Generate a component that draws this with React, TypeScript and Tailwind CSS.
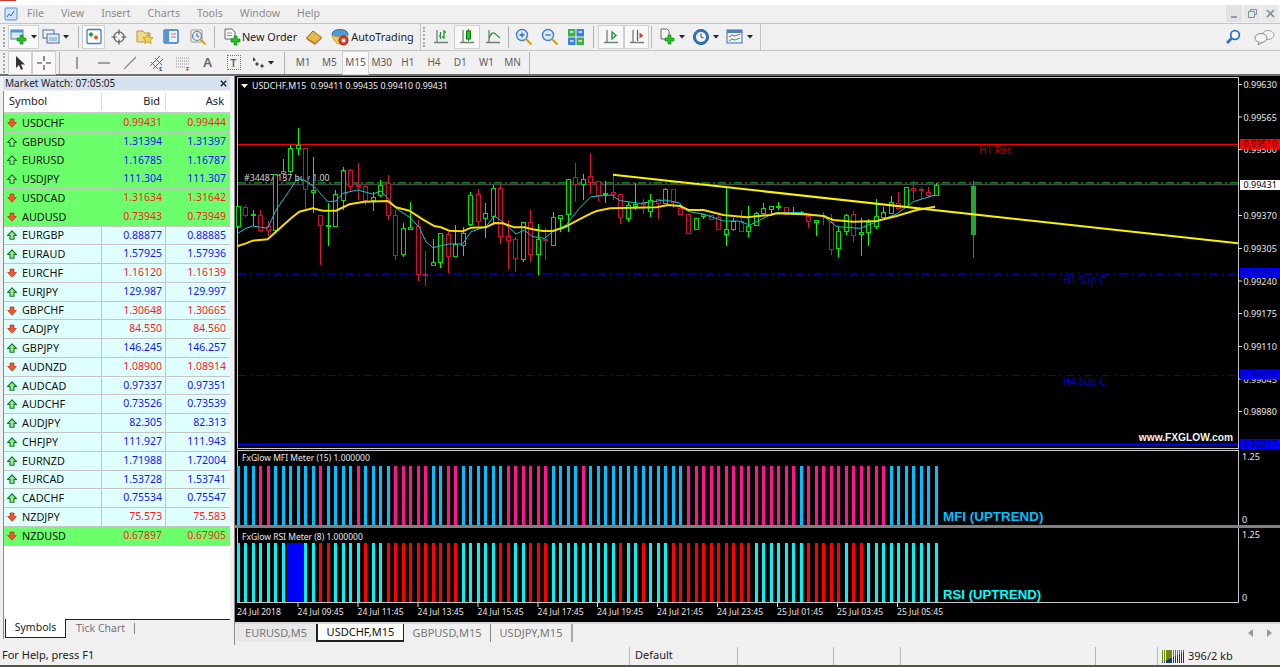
import type { ReactNode } from 'react'

const menus = ['File', 'View', 'Insert', 'Charts', 'Tools', 'Window', 'Help']
const periods = ['M1', 'M5', 'M15', 'M30', 'H1', 'H4', 'D1', 'W1', 'MN']

// symbol, bid, ask, falling, highlighted
const quotes: [string, string, string, boolean, boolean][] = [
  ['USDCHF', '0.99431', '0.99444', true, true],
  ['GBPUSD', '1.31394', '1.31397', false, true],
  ['EURUSD', '1.16785', '1.16787', false, true],
  ['USDJPY', '111.304', '111.307', false, true],
  ['USDCAD', '1.31634', '1.31642', true, true],
  ['AUDUSD', '0.73943', '0.73949', true, true],
  ['EURGBP', '0.88877', '0.88885', false, false],
  ['EURAUD', '1.57925', '1.57936', false, false],
  ['EURCHF', '1.16120', '1.16139', true, false],
  ['EURJPY', '129.987', '129.997', false, false],
  ['GBPCHF', '1.30648', '1.30665', true, false],
  ['CADJPY', '84.550', '84.560', true, false],
  ['GBPJPY', '146.245', '146.257', false, false],
  ['AUDNZD', '1.08900', '1.08914', true, false],
  ['AUDCAD', '0.97337', '0.97351', false, false],
  ['AUDCHF', '0.73526', '0.73539', false, false],
  ['AUDJPY', '82.305', '82.313', false, false],
  ['CHFJPY', '111.927', '111.943', false, false],
  ['EURNZD', '1.71988', '1.72004', false, false],
  ['EURCAD', '1.53728', '1.53741', false, false],
  ['CADCHF', '0.75534', '0.75547', false, false],
  ['NZDJPY', '75.573', '75.583', true, false],
  ['NZDUSD', '0.67897', '0.67905', true, true],
]

// [green?, wick top, body top, body bottom, wick bottom], read from the chart at 3x
type C = [number, number, number, number, number]
const candlesA: C[] = [
  [1, 258, 258, 320, 325], [0, 255, 262, 285, 290], [1, 270, 284, 287, 318], [0, 270, 287, 330, 335],
  [0, 303, 318, 330, 348], [1, 162, 162, 330, 335], [1, 118, 153, 160, 178], [1, 75, 85, 153, 160],
  [1, 25, 75, 85, 105], [0, 85, 85, 208, 270], [1, 112, 211, 217, 280], [0, 287, 287, 316, 435],
  [1, 250, 315, 317, 378], [1, 210, 222, 318, 320], [1, 140, 152, 240, 270], [0, 148, 152, 200, 215],
  [0, 130, 197, 200, 240], [0, 195, 200, 240, 255], [1, 215, 232, 240, 272], [1, 180, 195, 225, 232],
  [0, 165, 190, 285, 300], [0, 270, 287, 405, 420], [1, 308, 324, 403, 412], [1, 245, 322, 327, 330],
  [0, 300, 320, 462, 482], [0, 393, 464, 466, 497], [1, 358, 427, 436, 436], [1, 338, 340, 428, 445],
  [0, 335, 343, 410, 458], [1, 315, 373, 410, 410], [1, 320, 340, 375, 407], [1, 215, 225, 313, 318],
  [0, 207, 223, 303, 318], [1, 250, 280, 296, 355], [1, 195, 205, 290, 315], [0, 195, 205, 348, 372],
  [0, 300, 350, 360, 450], [0, 350, 357, 415, 455], [1, 307, 307, 418, 425], [0, 270, 307, 402, 425],
  [1, 312, 358, 402, 465], [0, 325, 358, 360, 420], [1, 275, 292, 375, 377], [1, 287, 287, 295, 335],
  [1, 178, 178, 282, 335], [0, 130, 172, 193, 245], [1, 163, 178, 192, 240], [0, 98, 170, 188, 222],
]
const candlesB: C[] = [
  [0, 124, 124, 165, 182], [1, 122, 160, 163, 190], [0, 105, 157, 163, 180], [0, 163, 163, 233, 252],
  [1, 185, 197, 235, 245], [1, 128, 193, 200, 210], [0, 178, 190, 193, 222], [1, 162, 182, 215, 232],
  [0, 177, 177, 190, 237], [1, 145, 147, 190, 192], [0, 148, 148, 188, 205], [0, 190, 205, 222, 225],
  [0, 222, 224, 281, 282], [1, 235, 235, 268, 270], [1, 222, 224, 228, 237], [0, 225, 225, 237, 240],
  [0, 225, 232, 268, 270], [1, 140, 267, 284, 318], [1, 235, 245, 268, 272], [0, 210, 245, 274, 275],
  [1, 198, 259, 273, 290], [1, 215, 220, 256, 258], [1, 190, 205, 220, 225], [1, 197, 199, 207, 228],
  [1, 187, 199, 201, 210], [0, 203, 203, 222, 225], [1, 200, 218, 221, 222], [1, 212, 217, 220, 225],
  [0, 225, 230, 245, 265], [1, 240, 242, 247, 287], [0, 215, 225, 228, 255], [0, 222, 248, 329, 345],
  [1, 262, 273, 326, 352], [1, 222, 227, 275, 285], [0, 213, 224, 285, 305], [1, 235, 277, 283, 347],
  [1, 238, 248, 278, 318], [1, 177, 230, 258, 268], [1, 200, 217, 232, 240], [1, 168, 188, 220, 222],
  [0, 155, 190, 205, 205], [1, 143, 143, 198, 205], [0, 123, 145, 151, 180], [0, 140, 149, 151, 178],
  [0, 142, 157, 166, 175], [1, 128, 135, 165, 168],
]
const candles = [
  ...candlesA.map((c) => [c[0], ...c.slice(1).map((v) => 120 + v / 3)]),
  ...candlesB.map((c) => [c[0], ...c.slice(1).map((v) => 140 + v / 3)]),
]

const barX = (i: number) => 237.7 + 7.505 * i

const pts = (list: number[][], ox: number, oy: number) => list.map(([x, y]) => `${ox + x / 3},${oy + y / 3}`).join(' ')
const yellowLine =
  pts([[5, 378], [30, 370], [50, 362], [95, 358], [120, 335], [165, 295], [190, 275], [230, 265], [260, 272], [300, 272], [340, 253], [385, 245], [455, 243], [480, 262], [520, 272], [560, 298], [595, 318], [615, 322], [640, 332], [680, 334], [705, 323], [750, 322], [775, 309], [800, 310], [835, 322], [865, 322], [890, 328], [920, 333], [950, 333], [985, 322], [1030, 298], [1065, 280]], 236, 120) +
  ' ' +
  pts([[20, 213], [60, 205], [200, 202], [235, 195], [270, 198], [295, 210], [340, 210], [400, 225], [470, 232], [540, 225], [560, 220], [640, 223], [700, 228], [730, 240], [790, 245], [860, 243], [920, 228], [980, 210], [1035, 200]], 590, 140)
const cyanLine =
  pts([[5, 340], [30, 325], [50, 318], [95, 325], [120, 270], [165, 205], [185, 175], [210, 183], [240, 205], [275, 245], [300, 243], [320, 220], [365, 210], [410, 222], [435, 213], [460, 240], [480, 265], [525, 295], [550, 323], [570, 365], [590, 383], [640, 372], [680, 372], [705, 335], [750, 320], [775, 287], [800, 305], [840, 342], [865, 330], [890, 350], [925, 355], [950, 335], [990, 315], [1030, 265], [1065, 230]], 236, 120) +
  ' ' +
  pts([[65, 165], [90, 182], [150, 190], [225, 180], [265, 188], [295, 215], [340, 222], [400, 243], [445, 243], [480, 255], [540, 225], [560, 218], [630, 218], [700, 228], [740, 260], [810, 265], [860, 245], [920, 222], [970, 185], [1035, 165]], 590, 140)

const priceScale: [string, number][] = [
  ['0.99630', 85], ['0.99565', 117.5], ['0.99500', 150], ['0.99370', 216], ['0.99305', 249],
  ['0.99240', 281.5], ['0.99175', 314], ['0.99110', 347], ['0.99045', 379.5], ['0.98980', 412],
]
const priceTags: [string, number, string, string][] = [
  ['0.99510', 139, '#ff0000', '#400000'],
  ['0.99431', 180, '#ffffff', '#000000'],
  ['0.99255', 268, '#0000ff', '#000060'],
  ['0.99054', 369.5, '#0000ff', '#000060'],
  ['0.98917', 439, '#0000ff', '#000060'],
]

const isIn = (i: number, ranges: number[][]) => ranges.some(([a, b]) => i >= a && i <= b)
const mfiPink = [[3, 4], [11, 11], [16, 16], [21, 25], [28, 29], [36, 41], [46, 46], [60, 74], [76, 86]]
const rsiRed = [[11, 12], [17, 17], [20, 29], [35, 36], [39, 41], [51, 51], [54, 54], [58, 68], [76, 80], [82, 83]]
const bars = Array.from({ length: 94 }, (_, i) => i)

const timeLabels: [string, number][] = [
  ['24 Jul 2018', 237], ['24 Jul 09:45', 297.5], ['24 Jul 11:45', 357.5], ['24 Jul 13:45', 417.5],
  ['24 Jul 15:45', 477.5], ['24 Jul 17:45', 537.5], ['24 Jul 19:45', 597], ['24 Jul 21:45', 657],
  ['24 Jul 23:45', 717], ['25 Jul 01:45', 777], ['25 Jul 03:45', 837], ['25 Jul 05:45', 897],
]

function Icon({ children, w = 18 }: { children: ReactNode; w?: number }) {
  return (
    <svg width={w} height="18" viewBox={`0 0 ${w} 18`} className="shrink-0">
      {children}
    </svg>
  )
}

const Plus = ({ x, y }: { x: number; y: number }) => (
  <path d={`M${x + 3} ${y}h3v3h3v3h-3v3h-3v-3h-3v-3h3z`} fill="#22c322" stroke="#0a7a0a" strokeWidth="0.6" />
)

const Caret = () => (
  <svg width="6" height="4" viewBox="0 0 6 4" className="ml-[3px] shrink-0">
    <path d="M0 0h6L3 3.5z" fill="#222" />
  </svg>
)

const Axes = () => <path d="M5 2v13M2 14.5h14" stroke="#6f7f7f" strokeWidth="1.3" fill="none" />

function Tool({ width, pressed, children }: { width: string; pressed?: boolean; children: ReactNode }) {
  return (
    <div
      className={`flex h-[24px] shrink-0 items-center justify-center ${width} ${
        pressed ? 'border border-[#d0d0d0] bg-[#f8f8f8]' : ''
      }`}
    >
      {children}
    </div>
  )
}

const Sep = ({ className }: { className: string }) => <div className={`h-[22px] w-[1px] shrink-0 bg-[#b4b4b4] ${className}`} />
const Grip = () => <div className="mr-[2px] h-[20px] w-[3px] shrink-0 border-l-2 border-dotted border-[#a8a8a8]" />

function Arrow({ down }: { down: boolean }) {
  return (
    <svg width="10" height="10" viewBox="0 0 10 10" className="shrink-0">
      {down ? (
        <path d="M3 1h4v3.5h2.4L5 9.3.6 4.5H3z" fill="#f4552a" stroke="#b8321a" strokeWidth="0.7" />
      ) : (
        <path d="M5 .8l4.4 4.7H7v3.7H3V5.5H.6z" fill="#9fe39f" stroke="#0c7c18" strokeWidth="1.1" />
      )}
    </svg>
  )
}

function MainPane() {
  return (
    <svg width="1045" height="374" viewBox="235 76 1045 374" className="block shrink-0 bg-black font-['Noto_Sans',sans-serif]">
      <path d="M237.5 77.5H1238.5V448.5H237.5z" fill="none" stroke="#c8c8c8" strokeWidth="1" shapeRendering="crispEdges" />
      <line x1="238" x2="1238" y1="144.5" y2="144.5" stroke="#f40000" strokeWidth="1.6" />
      <line x1="238" x2="1238" y1="182.8" y2="182.8" stroke="#107a18" strokeWidth="1.8" strokeDasharray="8 3 2 3" />
      <line x1="238" x2="1238" y1="184.6" y2="184.6" stroke="#474747" strokeWidth="1.4" />
      <line x1="238" x2="1238" y1="274" y2="274" stroke="#0000c0" strokeWidth="1.6" strokeDasharray="8 4 2 4" />
      <line x1="238" x2="1238" y1="375.5" y2="375.5" stroke="#0000d8" strokeWidth="1" strokeDasharray="8 4 2 4" />
      <line x1="238" x2="1238" y1="444.5" y2="444.5" stroke="#0000ff" strokeWidth="2" />

      <text x="979" y="154" fontSize="10" fill="#b00000">H1 Res</text>
      <text x="1063" y="284" fontSize="10" fill="#0000c8">H1 Sup C</text>
      <text x="1063" y="384.5" fontSize="10" fill="#0000c8">H4 Sup C</text>
      <text x="244" y="181" fontSize="8.8" fill="#d4d4d4">#34487 137 buy 1.00</text>

      <g shapeRendering="crispEdges">
        {candles.map(([g, wt, bt, bb, wb], i) => {
          const x = Math.round(barX(i))
          const col = g ? '#00e000' : '#c81038'
          return (
            <g key={i}>
              <line x1={x + 0.5} x2={x + 0.5} y1={wt} y2={wb} stroke={g ? '#00ff00' : '#dc143c'} />
              <rect x={x - 1.5} y={bt} width="4" height={Math.max(bb - bt, 1)} fill="#000" stroke={col} />
            </g>
          )
        })}
        <line x1="973" x2="973" y1="181" y2="258" stroke="#1f9c2e" />
        <rect x="970.5" y="186" width="5" height="49" fill="#22a832" />
      </g>

      <polyline points={cyanLine} fill="none" stroke="#12c8d0" strokeWidth="1" />
      <polyline points={yellowLine} fill="none" stroke="#f6dc00" strokeWidth="2" />
      <line x1="613" y1="174.8" x2="1238" y2="243.3" stroke="#f8f400" strokeWidth="2" />

      <path d="M241 84h7l-3.5 4z" fill="#fff" />
      <text x="252" y="89" fontSize="8.8" fill="#f0f0f0" xmlSpace="preserve">USDCHF,M15  0.99411 0.99435 0.99410 0.99431</text>
      <text x="1233" y="440.5" fontSize="10.2" fontWeight="700" textAnchor="end" fill="#f4f4f4" className="font-['Liberation_Sans',sans-serif]">www.FXGLOW.com</text>

      {priceScale.map(([label, y]) => (
        <g key={label}>
          <line x1="1238" x2="1242" y1={y - 0.5} y2={y - 0.5} stroke="#ddd" />
          <text x="1243.5" y={y + 3} fontSize="9" fill="#e8e8e8">{label}</text>
        </g>
      ))}
      {priceTags.map(([label, y, bg, fg]) => (
        <g key={label}>
          <rect x="1240" y={y} width="40" height="10" fill={bg} />
          <text x="1243.5" y={y + 8.2} fontSize="9" fill={fg}>{label}</text>
        </g>
      ))}
    </svg>
  )
}

function MfiPane() {
  return (
    <svg width="1045" height="75" viewBox="235 450 1045 75" className="block shrink-0 bg-black font-['Noto_Sans',sans-serif]">
      <path d="M237.5 525V450.5H1238.5V525" fill="none" stroke="#c8c8c8" shapeRendering="crispEdges" />
      <text x="242" y="461" fontSize="8.5" fill="#e8e8e8">FxGlow MFI Meter (15) 1.000000</text>
      <g shapeRendering="crispEdges">
        {bars.map((i) => (
          <rect key={i} x={Math.round(barX(i)) - 1} y="466" width="3" height="59" fill={isIn(i, mfiPink) ? '#ff1493' : '#00bfff'} />
        ))}
      </g>
      <text x="943" y="520.5" fontSize="13.4" fontWeight="700" fill="#00bfff" className="font-['Liberation_Sans',sans-serif]">MFI (UPTREND)</text>
      <text x="1242" y="459.5" fontSize="9" fill="#e8e8e8">1.25</text>
      <text x="1242" y="523" fontSize="9" fill="#e8e8e8">0</text>
    </svg>
  )
}

function RsiPane() {
  return (
    <svg width="1045" height="94" viewBox="235 528 1045 94" className="block shrink-0 bg-black font-['Noto_Sans',sans-serif]">
      <path d="M237.5 528v74.5H1238.5V528" fill="none" stroke="#c8c8c8" shapeRendering="crispEdges" />
      <text x="242" y="539.5" fontSize="8.5" fill="#e8e8e8">FxGlow RSI Meter (8) 1.000000</text>
      <g shapeRendering="crispEdges">
        {bars.map((i) =>
          i === 7 || i === 8 ? (
            <rect key={i} x={Math.round(barX(i)) - 3} y="543" width="8" height="59" fill="#0000ff" />
          ) : (
            <rect key={i} x={Math.round(barX(i)) - 1} y="543" width="3" height="59" fill={isIn(i, rsiRed) ? '#ff0000' : '#00f4f4'} />
          ),
        )}
      </g>
      <text x="943" y="598.5" fontSize="13.2" fontWeight="700" fill="#00ffff" className="font-['Liberation_Sans',sans-serif]">RSI (UPTREND)</text>
      <text x="1242" y="538" fontSize="9" fill="#e8e8e8">1.25</text>
      <text x="1242" y="600.5" fontSize="9" fill="#e8e8e8">0</text>
      {timeLabels.map(([label, x], i) => (
        <g key={label}>
          {i > 0 && <line x1={x + 0.5} x2={x + 0.5} y1="603" y2="607" stroke="#ddd" />}
          <text x={x} y="615" fontSize="8.6" fill="#e8e8e8">{label}</text>
        </g>
      ))}
    </svg>
  )
}

export default function App() {
  return (
    <div className="flex h-[667px] w-[1280px] flex-col overflow-hidden bg-[#f0f0f0] font-['Noto_Sans',sans-serif] text-[11px] text-black">
      <div className="h-[5px] shrink-0 bg-white">
        <div className="h-[1px] w-[16px] bg-[#d8352a]" />
      </div>

      {/* Menu */}
      <div className="relative flex h-[19px] shrink-0 items-center border-b border-[#c4c4c4] text-[10.6px] text-[#8c8c8c]">
        <svg width="14" height="14" viewBox="0 0 14 14" className="ml-[4px] shrink-0">
          <rect x="1" y="1" width="12" height="12" rx="1" fill="#cfe2f6" stroke="#5b8fc7" />
          <path d="M3 10l2-3 2 2 3-5" stroke="#3b6ea5" fill="none" />
        </svg>
        <div className="ml-[9px] flex gap-[17px]">
          {menus.map((m) => (
            <span key={m}>{m}</span>
          ))}
        </div>
        <div className="ml-auto mr-[2px] flex h-[18px] items-start gap-[2px]">
          <div className="flex h-[17px] w-[16px] items-center justify-center bg-[#e2e2e2]">
            <div className="mt-[6px] h-[2px] w-[6px] bg-[#8a9aa6]" />
          </div>
          <div className="flex h-[17px] w-[16px] items-center justify-center bg-[#e8e8e8]">
            <svg width="9" height="9" viewBox="0 0 9 9">
              <path d="M2.5 2.5V.5h6v5h-2M.5 2.5h6v6h-6z" fill="none" stroke="#7f8f9c" />
            </svg>
          </div>
          <div className="flex h-[17px] w-[16px] items-center justify-center bg-[#e8e8e8]">
            <svg width="9" height="9" viewBox="0 0 9 9">
              <path d="M1 1l7 7M8 1L1 8" stroke="#7f8f9c" strokeWidth="1.6" />
            </svg>
          </div>
        </div>
      </div>

      {/* Main toolbar */}
      <div className="flex h-[27px] shrink-0 items-center">
        <div className="flex h-[27px] w-[421px] shrink-0 items-center border-r border-b border-[#c4c4c4] pl-[3px]">
          <Grip />
          <Tool width="w-[31px]" pressed>
            <Icon>
              <rect x="1" y="2" width="12" height="9" fill="#dcebfa" stroke="#3f80c8" />
              <rect x="1" y="2" width="12" height="2.5" fill="#4f93d8" />
              <Plus x={7} y={7} />
            </Icon>
            <Caret />
          </Tool>
          <Tool width="w-[33px]">
            <Icon>
              <rect x="1" y="2" width="11" height="8" fill="#eef4fb" stroke="#4a6e96" />
              <rect x="5" y="6" width="12" height="9" fill="#dcebfa" stroke="#4a6e96" />
              <path d="M7 10h8M7 12h8" stroke="#7a9ac0" />
            </Icon>
            <Caret />
          </Tool>
          <Sep className="ml-[6px] mr-[3px]" />
          <Tool width="w-[23px]" pressed>
            <Icon w={16}>
              <rect x="1" y="1.5" width="14" height="14" rx="1" fill="#fff" stroke="#3f80c8" strokeWidth="1.3" />
              <path d="M5 4l2.5 2.5L5 9 2.5 6.5z" fill="#1f9c2e" />
              <path d="M10 7l2.5 2.5L10 12 7.5 9.5z" fill="#e25a1c" />
            </Icon>
          </Tool>
          <Tool width="w-[27px]">
            <Icon w={16}>
              <circle cx="8" cy="9" r="5" fill="none" stroke="#7a7a7a" strokeWidth="1.6" />
              <path d="M8 1.5v5M8 11.5v5M.5 9h5M10.5 9h5" stroke="#555" strokeWidth="1.2" />
            </Icon>
          </Tool>
          <Tool width="w-[26px]">
            <Icon>
              <path d="M1 3h6l1.5 2H14v3l-6 6H1z" fill="#f2d98a" stroke="#b89a3c" />
              <path d="M12 6l1.6 3.4 3.4.4-2.5 2.4.7 3.5-3.2-1.8-3.2 1.8.7-3.5L7 9.8l3.4-.4z" fill="#f4d44a" stroke="#a98a20" strokeWidth="0.7" />
            </Icon>
          </Tool>
          <Tool width="w-[26px]">
            <Icon w={16}>
              <rect x="1" y="2" width="14" height="13" rx="1" fill="#eaf3fc" stroke="#2f78c4" strokeWidth="1.4" />
              <rect x="2" y="3" width="4" height="11" fill="#4f93d8" />
              <path d="M8 6h5M8 9h5" stroke="#d05030" strokeWidth="0.8" />
            </Icon>
          </Tool>
          <Tool width="w-[27px]">
            <Icon>
              <rect x="2" y="2" width="11" height="12" rx="1" fill="#f4efe6" stroke="#9a9a9a" />
              <circle cx="8" cy="8" r="4.5" fill="#dce8f4" stroke="#6f7f8f" strokeWidth="1.2" />
              <path d="M8 5.5V8l2 1" stroke="#4a5a6a" fill="none" />
              <path d="M11.5 11.5l5 5" stroke="#d4a020" strokeWidth="2" />
            </Icon>
          </Tool>
          <Sep className="ml-[3px] mr-[4px]" />
          <Tool width="w-[82px]">
            <Icon>
              <path d="M2 1h7l3 3v7H2z" fill="#f4f4f4" stroke="#6b6b6b" />
              <path d="M4 5h5M4 7.5h5" stroke="#999" />
              <Plus x={8} y={8} />
            </Icon>
            <span className="ml-[1px] text-[10.8px] text-[#222]">New Order</span>
          </Tool>
          <Tool width="w-[26px]">
            <Icon>
              <path d="M1.5 10L8 3l8.5 6.5L10 15.5z" fill="#e7b94a" stroke="#8a6418" />
              <path d="M1.5 10v1.5L10 17l6.5-6V9.5L10 15.5z" fill="#b8862c" />
            </Icon>
          </Tool>
          <Tool width="w-[91px]">
            <Icon>
              <ellipse cx="9" cy="6" rx="8" ry="4.5" fill="#4f9ad8" stroke="#2f6ea8" />
              <path d="M1 7c1 5 4 9 8 9s7-3 8-9c-3 2-13 2-16 0z" fill="#f0c85a" stroke="#a98a20" strokeWidth="0.7" />
              <circle cx="12.5" cy="12.5" r="4.5" fill="#e8352a" stroke="#a01c14" />
              <rect x="10.8" y="10.8" width="3.4" height="3.4" fill="#fff" />
            </Icon>
            <span className="ml-[2px] text-[10.8px] text-[#222]">AutoTrading</span>
          </Tool>
        </div>
        <div className="flex h-[27px] w-[340px] shrink-0 items-center border-r border-b border-[#c4c4c4] pl-[2px]">
          <Grip />
          <Tool width="w-[26px]">
            <Icon>
              <Axes />
              <path d="M8.5 4v7M8.5 8H7M12 2v9M12 4h2M12 9h-2" stroke="#1f9c2e" strokeWidth="1.3" fill="none" />
            </Icon>
          </Tool>
          <Tool width="w-[26px]" pressed>
            <Icon>
              <Axes />
              <path d="M10.5 1v12" stroke="#1f7c28" />
              <rect x="8.5" y="3" width="4" height="8" fill="#22c322" stroke="#0a7a0a" />
            </Icon>
          </Tool>
          <Tool width="w-[26px]">
            <Icon>
              <Axes />
              <path d="M5 10c2-4 3-6 5-5s3 3 6 5" stroke="#1f9c2e" strokeWidth="1.2" fill="none" />
            </Icon>
          </Tool>
          <Sep className="mx-[2px]" />
          <Tool width="w-[26px]">
            <Icon>
              <circle cx="7" cy="7" r="5.5" fill="#d8eafc" stroke="#3f80c8" strokeWidth="1.4" />
              <path d="M4.5 7h5M7 4.5v5" stroke="#2f6ea8" strokeWidth="1.3" />
              <path d="M11 11l5.5 5.5" stroke="#d4a020" strokeWidth="2.2" />
            </Icon>
          </Tool>
          <Tool width="w-[26px]">
            <Icon>
              <circle cx="7" cy="7" r="5.5" fill="#d8eafc" stroke="#3f80c8" strokeWidth="1.4" />
              <path d="M4.5 7h5" stroke="#2f6ea8" strokeWidth="1.3" />
              <path d="M11 11l5.5 5.5" stroke="#d4a020" strokeWidth="2.2" />
            </Icon>
          </Tool>
          <Tool width="w-[26px]">
            <Icon>
              <rect x="1" y="1" width="7.5" height="7.5" fill="#3fb04a" />
              <rect x="9.5" y="1" width="7.5" height="7.5" fill="#3f80d8" />
              <rect x="1" y="9.5" width="7.5" height="7.5" fill="#3f80d8" />
              <rect x="9.5" y="9.5" width="7.5" height="7.5" fill="#3fb04a" />
              <path d="M3 4h3.5M11.5 4H15M3 13h3.5M11.5 13H15" stroke="#e8f4e8" strokeWidth="1.6" />
            </Icon>
          </Tool>
          <Sep className="mx-[4px]" />
          <Tool width="w-[26px]" pressed>
            <Icon>
              <Axes />
              <path d="M10 4l4 3.5-4 3.5z" fill="none" stroke="#1f9c2e" strokeWidth="1.4" />
            </Icon>
          </Tool>
          <Tool width="w-[25px]" pressed>
            <Icon>
              <Axes />
              <path d="M9.5 2v11" stroke="#3f5f8f" strokeWidth="1.2" />
              <path d="M15.5 7.5l-4-3v6z" fill="#d8402a" />
            </Icon>
          </Tool>
          <Sep className="ml-[2px] mr-[3px]" />
          <Tool width="w-[33px]">
            <Icon>
              <path d="M3 1h6l2 2v8H3z" fill="#f4f4f4" stroke="#6b6b6b" />
              <Plus x={7} y={7} />
            </Icon>
            <Caret />
          </Tool>
          <Tool width="w-[35px]">
            <Icon>
              <circle cx="9" cy="9" r="7.5" fill="#2f78c4" stroke="#1c5a9a" />
              <circle cx="9" cy="9" r="5" fill="#f4f4f4" />
              <path d="M9 5.5V9l2.5 1" stroke="#444" fill="none" />
            </Icon>
            <Caret />
          </Tool>
          <Tool width="w-[33px]">
            <Icon>
              <rect x="1" y="2" width="15" height="13" fill="#eaf3fc" stroke="#3f6ea5" />
              <rect x="1" y="2" width="15" height="3" fill="#4f7fb8" />
              <path d="M3 9l3-2 3 1 5-2" stroke="#c8582a" fill="none" />
              <path d="M3 13l3-2 3 1 5-2" stroke="#3f9c4a" fill="none" />
            </Icon>
            <Caret />
          </Tool>
        </div>
        <div className="flex h-[27px] flex-1 items-center justify-end gap-[13px] border-b border-[#c4c4c4] pr-[5px]">
          <svg width="16" height="16" viewBox="0 0 16 16">
            <circle cx="10" cy="6" r="4.3" fill="#fff" stroke="#2f6fc8" strokeWidth="1.8" />
            <path d="M7 9l-5 5" stroke="#2f6fc8" strokeWidth="2.6" />
          </svg>
          <svg width="21" height="16" viewBox="0 0 21 16">
            <ellipse cx="14" cy="6" rx="6" ry="4.5" fill="#f4f4f4" stroke="#a0a0a0" />
            <ellipse cx="7" cy="9" rx="6" ry="4.5" fill="#f4f4f4" stroke="#8a8a8a" />
            <path d="M5 13l-1 3 4-2.5" fill="#f4f4f4" stroke="#8a8a8a" />
          </svg>
        </div>
      </div>

      {/* Drawing toolbar */}
      <div className="flex h-[25px] shrink-0 items-center border-b-2 border-[#6e6e6e] pl-[3px]">
        <Grip />
        <Tool width="w-[24px]" pressed>
          <svg width="12" height="16" viewBox="0 0 12 16">
            <path d="M2 1v12l3-3 2 5 2-1-2-4.5h4z" fill="#333" />
          </svg>
        </Tool>
        <Tool width="w-[24px]" pressed>
          <svg width="16" height="16" viewBox="0 0 16 16">
            <path d="M8 1v5M8 10v5M1 8h5M10 8h5" stroke="#333" strokeWidth="1.1" />
          </svg>
        </Tool>
        <Sep className="ml-[3px] mr-[4px]" />
        <Tool width="w-[26px]">
          <svg width="16" height="16" viewBox="0 0 16 16">
            <path d="M8 2v12" stroke="#777" strokeWidth="1.4" />
          </svg>
        </Tool>
        <Tool width="w-[27px]">
          <svg width="16" height="16" viewBox="0 0 16 16">
            <path d="M2 8h12" stroke="#777" strokeWidth="1.4" />
          </svg>
        </Tool>
        <Tool width="w-[26px]">
          <svg width="16" height="16" viewBox="0 0 16 16">
            <path d="M2 14L14 2" stroke="#888" strokeWidth="1.3" />
          </svg>
        </Tool>
        <Tool width="w-[27px]">
          <svg width="16" height="16" viewBox="0 0 16 16">
            <path d="M1 11L11 1M4 14L14 4M2 7l7 7M6 3l7 7" stroke="#666" strokeWidth="1" />
            <text x="10" y="15.5" fontSize="6" fontWeight="700" fill="#555">E</text>
          </svg>
        </Tool>
        <Tool width="w-[25px]">
          <svg width="16" height="16" viewBox="0 0 16 16">
            <path d="M1 3h13M1 6h13M1 9h13M1 12h9" stroke="#888" strokeDasharray="1 1" />
            <text x="11" y="15.5" fontSize="6" fontWeight="700" fill="#555">F</text>
          </svg>
        </Tool>
        <Tool width="w-[25px]">
          <span className="text-[13px] font-semibold leading-none text-[#666]">A</span>
        </Tool>
        <Tool width="w-[27px]">
          <div className="flex h-[15px] w-[14px] items-center justify-center border border-dotted border-[#777] text-[11px] font-semibold leading-none text-[#666]">
            T
          </div>
        </Tool>
        <Tool width="w-[30px]">
          <svg width="14" height="14" viewBox="0 0 14 14">
            <path d="M2 1l3 3-3 1.5zM6 6l2 2-2 2-2-2zM11 8l2 2-2 2-2-2z" fill="#444" />
          </svg>
          <Caret />
        </Tool>
        <Sep className="ml-[7px] mr-[1px]" />
        <div className="flex items-center pl-[4px] text-[10px] text-[#5c5c5c]">
          {periods.map((p) => (
            <Tool key={p} width="w-[26.2px]" pressed={p === 'M15'}>
              {p}
            </Tool>
          ))}
        </div>
        <Sep className="mx-[3px]" />
      </div>

      {/* Workspace */}
      <div className="flex min-h-0 flex-1">
        <aside className="flex w-[234px] shrink-0 flex-col pl-[3px] pr-[4px]">
          <div className="mt-[1px] flex h-[13px] shrink-0 items-center justify-between bg-[#d5e1ee] pl-[2px] pr-[3px] text-[10px] text-[#222]">
            <span>Market Watch: 07:05:05</span>
            <svg width="7" height="7" viewBox="0 0 7 7">
              <path d="M.8.8l5.4 5.4M6.2.8L.8 6.2" stroke="#222" strokeWidth="1.4" />
            </svg>
          </div>
          <div className="mt-[1px] flex h-[528px] shrink-0 flex-col border-l border-[#8a8a8a] bg-white">
            <div className="flex h-[23px] shrink-0 items-center border-b-2 border-[#c8c8c8] text-[11px] text-[#222]">
              <div className="w-[97px] pl-[5px]">Symbol</div>
              <div className="w-[64px] border-l border-[#dcdcdc] pr-[5px] text-right">Bid</div>
              <div className="w-[63px] border-l border-[#dcdcdc] pr-[4px] text-right">Ask</div>
            </div>
            {quotes.map(([sym, bid, ask, falling, hot]) => (
              <div
                key={sym}
                className={`flex h-[18.77px] shrink-0 items-center border-b border-[#c4c4c4] text-[10.5px] ${
                  hot ? 'bg-[#6cff6c]' : 'bg-[#e0ffff]'
                }`}
              >
                <div className="flex w-[97px] items-center gap-[5px] pl-[3px] text-[10.8px] text-[#111]">
                  <Arrow down={falling} />
                  {sym}
                </div>
                <div className={`flex h-full w-[64px] items-center justify-end border-l border-[#c4c4c4] pr-[3px] ${falling ? 'text-[#ff1a1a]' : 'text-[#1414ff]'}`}>
                  {bid}
                </div>
                <div className={`flex h-full w-[63px] items-center justify-end border-l border-[#c4c4c4] pr-[2px] ${falling ? 'text-[#ff1a1a]' : 'text-[#1414ff]'}`}>
                  {ask}
                </div>
              </div>
            ))}
          </div>
          <div className="flex h-[20px] shrink-0 items-start border-l border-[#8a8a8a] text-[10.5px]">
            <div className="ml-[1px] flex h-[19px] w-[61px] items-center justify-center border-r border-b border-l border-[#222] bg-white text-[#222]">Symbols</div>
            <div className="flex h-[18px] flex-1 items-center border-t border-[#222] pl-[10px] text-[#777]">
              Tick Chart
              <div className="ml-[9px] h-[11px] w-[1px] bg-[#888]" />
            </div>
          </div>
        </aside>

        <main className="flex min-w-0 flex-1 flex-col border-l border-[#8a8a8a]">
          <MainPane />
          <MfiPane />
          <div className="h-[3px] shrink-0 bg-[#808080]" />
          <RsiPane />
          <div className="h-[2px] shrink-0 bg-[#d8d8d8]" />
          <div className="flex h-[21px] shrink-0 items-start pl-[1px] text-[11px] text-[#777]">
            <div className="flex h-[18px] w-[82px] items-center justify-center border-r-2 border-[#222] bg-[#e8e8e8]">EURUSD,M5</div>
            <div className="flex h-[18px] w-[86px] items-center justify-center border-r border-b-2 border-[#222] bg-white text-[#111]">USDCHF,M15</div>
            <div className="flex h-[18px] w-[87px] items-center justify-center border-r border-[#888]">GBPUSD,M15</div>
            <div className="flex h-[18px] w-[82px] items-center justify-center border-r-2 border-[#aaa]">USDJPY,M15</div>
            <div className="ml-auto mr-[8px] mt-[5px] flex gap-[14px]">
              <svg width="5" height="8" viewBox="0 0 5 8"><path d="M5 0v8L0 4z" fill="#999" /></svg>
              <svg width="5" height="8" viewBox="0 0 5 8"><path d="M0 0v8l5-4z" fill="#999" /></svg>
            </div>
          </div>
        </main>
      </div>

      {/* Status bar */}
      <div className="flex h-[22px] shrink-0 items-stretch border-b-2 border-[#55553c] pt-[2px] text-[11px] text-[#222]">
        <div className="w-[630px] border-r border-[#b8b8b8] pl-[2px]">For Help, press F1</div>
        <div className="w-[108px] border-r border-[#b8b8b8] pl-[5px]">Default</div>
        <div className="w-[96px] border-r border-[#b8b8b8]" />
        <div className="w-[67px] border-r border-[#b8b8b8]" />
        <div className="w-[195px] border-r border-[#b8b8b8]" />
        <div className="w-[62px] border-r border-[#b8b8b8]" />
        <div className="flex flex-1 items-center gap-[3px] pl-[4px]">
          <svg width="23" height="13" viewBox="0 0 23 13" shapeRendering="crispEdges">
            {Array.from({ length: 11 }, (_, i) => (
              <g key={i}>
                <rect x={i * 2.1} y="0" width="1.3" height="13" fill="#6a8a14" />
                <rect x={i * 2.1} y={12 - i} width="1.3" height={i + 1} fill="#1c3a6e" />
              </g>
            ))}
          </svg>
          <span>396/2 kb</span>
        </div>
      </div>
    </div>
  )
}
